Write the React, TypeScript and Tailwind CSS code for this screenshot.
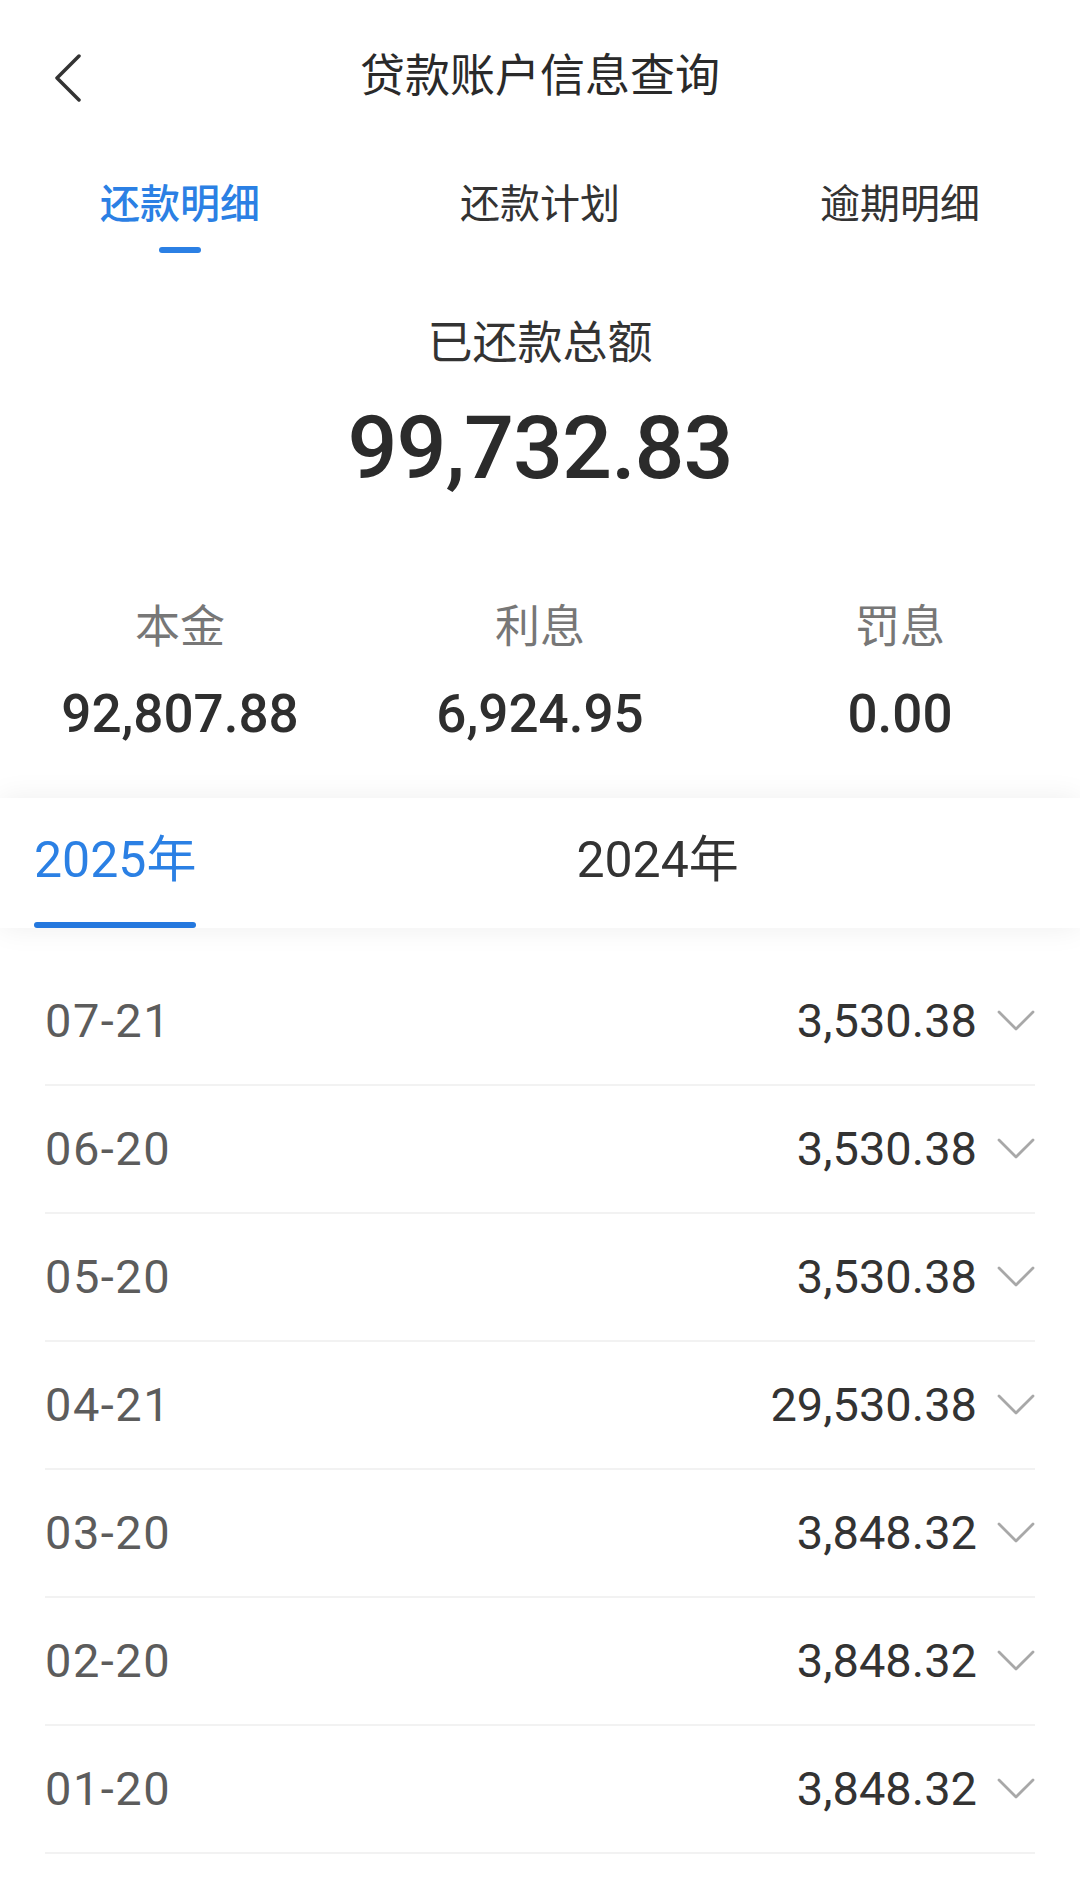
const rows = [
  { date: "07-21", amount: "3,530.38" },
  { date: "06-20", amount: "3,530.38" },
  { date: "05-20", amount: "3,530.38" },
  { date: "04-21", amount: "29,530.38" },
  { date: "03-20", amount: "3,848.32" },
  { date: "02-20", amount: "3,848.32" },
  { date: "01-20", amount: "3,848.32" },
];

const font = { fontFamily: 'Roboto, "Noto Sans CJK SC", sans-serif' };

function Chevron() {
  return (
    <svg width="38" height="22" viewBox="0 0 38 22" fill="none">
      <path d="M2 2 L19 19 L36 2" stroke="#a8a8a8" strokeWidth="2.8" strokeLinecap="round" strokeLinejoin="round" />
    </svg>
  );
}

export default function App() {
  return (
    <div className="w-[1080px] h-[1899px] bg-white overflow-hidden text-[#333]" style={font}>
      {/* header */}
      <div className="relative h-[154px] flex items-center justify-center">
        <svg className="absolute left-[53px] top-[54px]" width="30" height="48" viewBox="0 0 30 48" fill="none">
          <path d="M26 2 L4 24 L26 46" stroke="#333" strokeWidth="3.5" strokeLinecap="round" strokeLinejoin="round" />
        </svg>
        <h1 className="text-[45px] leading-[56px] text-[#2a2a2a]">贷款账户信息查询</h1>
      </div>

      {/* top tabs */}
      <div className="grid grid-cols-3 pt-[23px]">
        <div className="flex flex-col items-center">
          <span className="text-[40px] leading-[56px] text-[#2b80e4] font-medium">还款明细</span>
          <span className="mt-[14px] w-[42px] h-[6px] rounded-full bg-[#2b80e4]" />
        </div>
        <div className="flex flex-col items-center">
          <span className="text-[40px] leading-[56px] text-[#333]">还款计划</span>
        </div>
        <div className="flex flex-col items-center">
          <span className="text-[40px] leading-[56px] text-[#333]">逾期明细</span>
        </div>
      </div>

      {/* summary */}
      <div className="flex flex-col items-center">
        <p className="mt-[63px] text-[45px] leading-[56px] text-[#333]">已还款总额</p>
        <p className="mt-[32px] text-[88px] leading-[87px] font-medium text-[#2b2b2b] tracking-[-1px]">99,732.83</p>
      </div>

      <div className="grid grid-cols-3 mt-[109px]">
        {[
          ["本金", "92,807.88"],
          ["利息", "6,924.95"],
          ["罚息", "0.00"],
        ].map(([label, value]) => (
          <div key={label} className="flex flex-col items-center">
            <span className="text-[45px] leading-[56px] text-[#777]">{label}</span>
            <span className="mt-[30px] text-[53px] leading-[56px] font-medium text-[#2e2e2e]">{value}</span>
          </div>
        ))}
      </div>

      {/* year tabs */}
      <div className="relative z-10 mt-[56px] h-[130px] bg-white shadow-[0_0_28px_rgba(0,0,0,0.07)] flex pl-[34px]">
        <div className="flex flex-col">
          <div className="h-[124px] flex items-center text-[50px] text-[#2b80e4]">2025年</div>
          <span className="h-[6px] rounded-full bg-[#2478de]" />
        </div>
        <div className="ml-[380px] h-[124px] flex items-center text-[50px] text-[#333]">2024年</div>
      </div>

      {/* list */}
      <div className="px-[45px] pt-[30px]">
        {rows.map((r) => (
          <div key={r.date} className="h-[128px] border-b-2 border-[#f2f2f2] flex items-center justify-between">
            <span className="text-[47px] tracking-[1.5px] text-[#5c5c5c]">{r.date}</span>
            <div className="flex items-center gap-[20px]">
              <span className="text-[47px] text-[#333]">{r.amount}</span>
              <Chevron />
            </div>
          </div>
        ))}
      </div>
    </div>
  );
}
